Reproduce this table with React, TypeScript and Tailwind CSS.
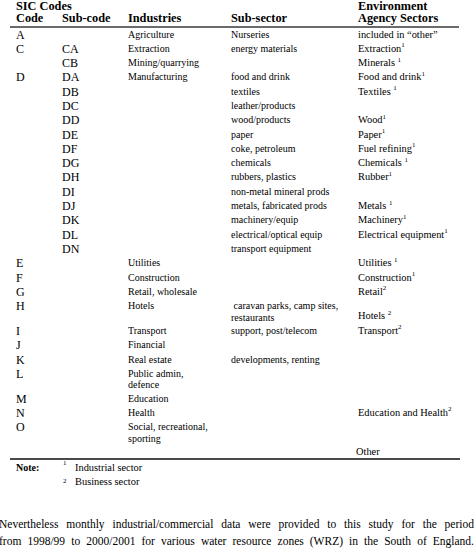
import React from "react";

type Row = {
  code?: string;
  sub?: string;
  ind?: React.ReactNode;
  sec?: React.ReactNode;
  env?: React.ReactNode;
  double?: boolean;
  envLow?: boolean;
};

const S = ({ n }: { n: string }) => <sup className="text-[7px] top-[-4.5px]">{n}</sup>;

const rows: Row[] = [
  { code: "A", ind: "Agriculture", sec: "Nurseries", env: <>included in “other”</> },
  { code: "C", sub: "CA", ind: "Extraction", sec: "energy materials", env: <>Extraction<S n="1" /></> },
  { sub: "CB", ind: "Mining/quarrying", env: <>Minerals <S n="1" /></> },
  { code: "D", sub: "DA", ind: "Manufacturing", sec: "food and drink", env: <>Food and drink<S n="1" /></> },
  { sub: "DB", sec: "textiles", env: <>Textiles <S n="1" /></> },
  { sub: "DC", sec: "leather/products" },
  { sub: "DD", sec: "wood/products", env: <>Wood<S n="1" /></> },
  { sub: "DE", sec: "paper", env: <>Paper<S n="1" /></> },
  { sub: "DF", sec: "coke, petroleum", env: <>Fuel refining<S n="1" /></> },
  { sub: "DG", sec: "chemicals", env: <>Chemicals <S n="1" /></> },
  { sub: "DH", sec: "rubbers, plastics", env: <>Rubber<S n="1" /></> },
  { sub: "DI", sec: "non-metal mineral prods" },
  { sub: "DJ", sec: "metals, fabricated prods", env: <>Metals <S n="1" /></> },
  { sub: "DK", sec: "machinery/equip", env: <>Machinery<S n="1" /></> },
  { sub: "DL", sec: "electrical/optical equip", env: <>Electrical equipment<S n="1" /></> },
  { sub: "DN", sec: "transport equipment" },
  { code: "E", ind: "Utilities", env: <>Utilities <S n="1" /></> },
  { code: "F", ind: "Construction", env: <>Construction<S n="1" /></> },
  { code: "G", ind: "Retail, wholesale", env: <>Retail<S n="2" /></> },
  {
    code: "H",
    ind: "Hotels",
    sec: (
      <>
        &nbsp;caravan parks, camp sites,
        <br />
        restaurants
      </>
    ),
    env: <>Hotels <S n="2" /></>,
    double: true,
    envLow: true,
  },
  { code: "I", ind: "Transport", sec: "support, post/telecom", env: <>Transport<S n="2" /></> },
  { code: "J", ind: "Financial" },
  { code: "K", ind: "Real estate", sec: "developments, renting" },
  {
    code: "L",
    ind: (
      <>
        Public admin,
        <br />
        defence
      </>
    ),
    double: true,
  },
  { code: "M", ind: "Education" },
  { code: "N", ind: "Health", env: <>Education and Health<S n="2" /></> },
  {
    code: "O",
    ind: (
      <>
        Social, recreational,
        <br />
        sporting
      </>
    ),
    double: true,
  },
];

const grid = "grid grid-cols-[46px_66px_103px_127px_1fr] pl-[16px]";

export default function App() {
  return (
    <div className="w-[474px] h-[557px] bg-white overflow-hidden text-black font-['Liberation_Serif',serif]">
      {/* Header */}
      <div className={grid + " font-bold text-[12.3px] leading-[12px]"}>
        <div className="col-span-4 whitespace-nowrap">SIC Codes</div>
        <div className="whitespace-nowrap">Environment</div>
        <div>Code</div>
        <div>Sub-code</div>
        <div>Industries</div>
        <div>Sub-sector</div>
        <div className="whitespace-nowrap">Agency Sectors</div>
      </div>
      <div className="ml-[10px] mt-[2px] w-[449px] h-[1.5px] bg-[#6a6a6a]" />

      {/* Body rows */}
      {rows.map((r, i) => (
        <div key={i} className={grid + (r.double ? " h-[24.8px]" : " h-[14.3px]")}>
          <div className="text-[12px] leading-[14.3px]">{r.code}</div>
          <div className="text-[12px] leading-[14.3px]">{r.sub}</div>
          <div className="text-[10px] leading-[11.5px] pt-[1px] whitespace-nowrap">{r.ind}</div>
          <div className="text-[10px] leading-[11.5px] pt-[1px] whitespace-nowrap">{r.sec}</div>
          <div
            className={
              "text-[10.4px] leading-[11.5px] whitespace-nowrap " + (r.envLow ? "pt-[11px]" : "pt-[1px]")
            }
          >
            {r.env}
          </div>
        </div>
      ))}
      <div className={grid + " h-[13px]"}>
        <div />
        <div />
        <div />
        <div />
        <div className="text-[10.4px] leading-[11.5px] pt-[1px] ml-[-2px]">Other</div>
      </div>
      <div className="ml-[10px] w-[450px] h-[1.5px] bg-[#4a4a4a]" />

      {/* Notes */}
      <div className="grid grid-cols-[47px_12px_1fr] pl-[16px] mt-[1px] text-[10.4px] leading-[14px]">
        <div className="font-bold text-[10px]">Note:</div>
        <div className="relative">
          <span className="absolute top-[-5px] text-[7px]">1</span>
        </div>
        <div>Industrial sector</div>
        <div />
        <div className="relative">
          <span className="absolute top-[-1px] text-[7px]">2</span>
        </div>
        <div>Business sector</div>
      </div>

      {/* Paragraph */}
      <p className="mt-[27px] ml-[-1px] w-[475px] text-[11.5px] leading-[17px] text-justify [text-align-last:justify] whitespace-nowrap">
        Nevertheless monthly industrial/commercial data were provided to this study for the period
        <br />
        from 1998/99 to 2000/2001 for various water resource zones (WRZ) in the South of England.
      </p>
    </div>
  );
}
